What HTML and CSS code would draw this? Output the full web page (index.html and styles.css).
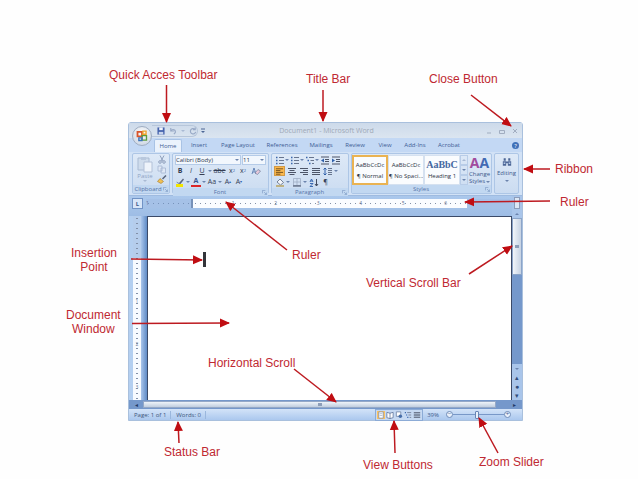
FILE: index.html
```html
<!DOCTYPE html>
<html lang="en">
<head>
  <meta charset="UTF-8" />
  <meta name="viewport" content="width=device-width, initial-scale=1.0"/>
  <title>Parts of the Word Window</title>
  <link rel="stylesheet" href="styles.css">
</head>
<body>
  <!-- shared icons -->
  <svg class="defs" width="0" height="0" aria-hidden="true">
    <symbol id="i-lines" viewBox="0 0 10 9"><path d="M1 1.5h8M1 3.5h8M1 5.5h8M1 7.5h8" stroke="#4d5568" fill="none"/></symbol>
    <symbol id="i-left" viewBox="0 0 10 9"><path d="M1 1.5h8M1 3.5h5M1 5.5h8M1 7.5h5" stroke="#6b4a1c" fill="none"/></symbol>
    <symbol id="i-center" viewBox="0 0 10 9"><path d="M1 1.5h8M2.5 3.5h5M1 5.5h8M2.5 7.5h5" stroke="#4d5568" fill="none"/></symbol>
    <symbol id="i-right" viewBox="0 0 10 9"><path d="M1 1.5h8M4 3.5h5M1 5.5h8M4 7.5h5" stroke="#4d5568" fill="none"/></symbol>
    <symbol id="i-bullets" viewBox="0 0 10 9"><path d="M1 1.5h1.5M1 4.5h1.5M1 7.5h1.5" stroke="#3b67ad" stroke-width="1.5"/><path d="M4 1.5h5M4 4.5h5M4 7.5h5" stroke="#68758e"/></symbol>
    <symbol id="i-multi" viewBox="0 0 10 9"><path d="M1 1.5h1.5M2.5 4.5H4M4 7.5h1.5" stroke="#3b67ad" stroke-width="1.5"/><path d="M4 1.5h5M5.5 4.5H9M7 7.5h2" stroke="#68758e"/></symbol>
    <symbol id="i-outdent" viewBox="0 0 10 9"><path d="M1 1h8M5 3.5h4M5 5.5h4M1 8h8" stroke="#4d5568"/><path d="M4 2.5v4L1 4.5z" fill="#2e5faa"/></symbol>
    <symbol id="i-indent" viewBox="0 0 10 9"><path d="M1 1h8M5 3.5h4M5 5.5h4M1 8h8" stroke="#4d5568"/><path d="M1 2.5v4l3-2z" fill="#2e5faa"/></symbol>
    <symbol id="i-spacing" viewBox="0 0 10 9"><path d="M2 1v7M.5 2.5L2 1l1.5 1.5M.5 6.5L2 8l1.5-1.5" stroke="#2e5faa" fill="none"/><path d="M5 1.5h4M5 3.5h4M5 5.5h4M5 7.5h4" stroke="#68758e"/></symbol>
    <symbol id="i-fill" viewBox="0 0 10 9"><path d="M2 4l3-3 3.5 3.5-3 2.5z" fill="#f3f5fa" stroke="#5d6980" stroke-width=".8"/><path d="M1 8h8" stroke="#b9a35e" stroke-width="1.5"/></symbol>
    <symbol id="i-border" viewBox="0 0 10 9"><path d="M1.5.5h7v7h-7zM5 .5v7M1.5 4h7" stroke="#9aa7bf" stroke-width=".7" fill="none"/><path d="M1 8h8" stroke="#3d4860"/></symbol>
    <symbol id="i-sort" viewBox="0 0 10 9"><path d="M1 4l1.5-3L4 4M1.5 3h2M1 5.5h3L1 8.5h3" stroke="#2e5faa" stroke-width=".9" fill="none"/><path d="M7.5 1v7M6 6l1.500 2L9 6" stroke="#444d60" fill="none"/></symbol>
    <symbol id="i-marker" viewBox="0 0 10 9"><path d="M1 3.500l3 1.500L8 .500l1 1L5.500 6 3 5.500z" fill="#5d6980"/><path d="M1 7.500h7" stroke="#f2e500" stroke-width="3"/></symbol>
    <symbol id="i-eraser" viewBox="0 0 10 9"><path d="M1 7l2-6 2 6M2 5h2" stroke="#4a6ea9" stroke-width=".8" fill="none"/><path d="M4 6l3-3.500 2.500 1.500-3 3.500z" fill="#e8c9dc" stroke="#71809c" stroke-width=".7"/></symbol>
    <symbol id="i-scissors" viewBox="0 0 10 9"><path d="M3 .5l3 5.500M7 .500L4 6" stroke="#8fa0bd" fill="none"/><circle cx="3" cy="7" r="1.300" fill="none" stroke="#8fa0bd"/><circle cx="7" cy="7" r="1.300" fill="none" stroke="#8fa0bd"/></symbol>
    <symbol id="i-copy" viewBox="0 0 10 9"><path d="M1 1h4v5H1zM4 3h4.500v5H4z" fill="#dfe8f5" stroke="#a3b5d2" stroke-width=".8"/></symbol>
    <symbol id="i-brush" viewBox="0 0 10 9"><path d="M9 .5L5.500 4" stroke="#56627a" stroke-width="1.500"/><path d="M3 3.500l3.500 3-2.500 2L.5 6.500z" fill="#f0c153" stroke="#a4792a" stroke-width=".6"/></symbol>
    <symbol id="i-paste" viewBox="0 0 18 17"><path d="M2 2h11v12H2z" fill="#cfdcec" stroke="#aabbd3"/><path d="M5 1h5v3H5z" fill="#b9c8dd"/><path d="M8 6h8v10H8z" fill="#eef3fa" stroke="#b2c1d8"/></symbol>
    <symbol id="i-launch" viewBox="0 0 6 6"><path d="M.5 4V.5H4M2.500 2.500l2.500 2.500M5.500 3v2.500H3" stroke="#7c98c3" stroke-width=".8" fill="none"/></symbol>
    <symbol id="i-binoc" viewBox="0 0 12 11"><path d="M2 1h2.500v3H2zM7.500 1H10v3H7.500zM1 4.500h4V10H1zM7 4.500h4V10H7zM5 5h2v2H5z" fill="#4d6797"/><path d="M2 6h2v2H2zM8 6h2v2H8z" fill="#b7cbe9"/></symbol>
    <symbol id="i-page" viewBox="0 0 8 9"><path d="M1.500 1h5v7h-5z" fill="#fff" stroke="#7087ae" stroke-width=".8"/><path d="M2.500 3h3M2.500 5h3" stroke="#8d9fbe" stroke-width=".7"/></symbol>
    <symbol id="i-book" viewBox="0 0 8 9"><path d="M.5 1.500L4 2.500l3.500-1v6L4 8.500l-3.500-1zM4 2.500v6" fill="#fff" stroke="#4f6691" stroke-width=".8"/></symbol>
    <symbol id="i-web" viewBox="0 0 8 9"><path d="M1 1h5v5H1z" fill="#fff" stroke="#5f7499" stroke-width=".8"/><circle cx="5.500" cy="6" r="2" fill="#466da8"/></symbol>
  </svg>

  <figure class="diagram">
    <div class="window">
      <header class="titlebar">
        <button class="office" aria-label="Office Button">
          <svg viewBox="0 0 20 20">
            <path d="M5 5.500h5v5H5z" fill="none" stroke="#d8552b" stroke-width="2"/>
            <path d="M11 4.500h3.500V8H11z" fill="none" stroke="#f0a22b" stroke-width="1.500"/>
            <path d="M10 9.500h5v5h-5z" fill="none" stroke="#5c9b3e" stroke-width="1.500"/>
            <path d="M6.500 12H10v3H6.500z" fill="none" stroke="#3b73b9" stroke-width="1.500"/>
          </svg>
        </button>
        <div class="quick">
          <button aria-label="Save"><svg viewBox="0 0 9 9"><path d="M.5.5h8v8h-8z" fill="#4563ad"/><path d="M2.500.5h4v3h-4z" fill="#f2f5fb"/><path d="M2 5.500h5v3H2z" fill="#c9d5ec"/></svg></button>
          <button aria-label="Undo"><svg viewBox="0 0 9 9"><path d="M2 1v3.500h3.500M2 4.500c2-3 6-1.500 5 2L5.500 8" fill="none" stroke="#98a9c6" stroke-width="1.300"/></svg></button>
          <i class="arrow pale"></i>
          <button aria-label="Repeat"><svg viewBox="0 0 9 9"><path d="M6.500 2.500a3 3 0 1 0 1 3M7 .5v2.500H4.500" fill="none" stroke="#98a9c6" stroke-width="1.300"/></svg></button>
        </div>
        <button class="customize" aria-label="Customize Quick Access Toolbar"><svg viewBox="0 0 6 6"><path d="M1 1h4" stroke="#4c6795"/><path d="M1 3h4L3 5z" fill="#4c6795"/></svg></button>
        <div class="title">Document1 - Microsoft Word</div>
        <div class="controls">
          <button aria-label="Minimize"><svg viewBox="0 0 8 8"><path d="M2 6h4"/></svg></button>
          <button aria-label="Restore"><svg viewBox="0 0 8 8"><path d="M1.500 3.500h5v3h-5z"/></svg></button>
          <button aria-label="Close"><svg viewBox="0 0 8 8"><path d="M2 2l4 4M6 2L2 6"/></svg></button>
        </div>
      </header>

      <nav class="tabs">
        <a class="active" href="#home">Home</a>
        <a href="#insert">Insert</a>
        <a class="wide" href="#layout">Page Layout</a>
        <a class="wide" href="#references">References</a>
        <a href="#mailings">Mailings</a>
        <a href="#review">Review</a>
        <a class="narrow" href="#view">View</a>
        <a href="#addins">Add-Ins</a>
        <a href="#acrobat">Acrobat</a>
        <button class="help" aria-label="Help">?</button>
      </nav>

      <div class="ribbon">
        <section class="group clipboard">
          <div class="tools">
            <button class="big paste"><svg><use href="#i-paste"/></svg>Paste<i class="arrow pale"></i></button>
            <div class="stack">
              <button aria-label="Cut"><svg><use href="#i-scissors"/></svg></button>
              <button aria-label="Copy"><svg><use href="#i-copy"/></svg></button>
              <button aria-label="Format Painter"><svg><use href="#i-brush"/></svg></button>
            </div>
          </div>
          <h2>Clipboard<svg><use href="#i-launch"/></svg></h2>
        </section>

        <section class="group font">
          <div class="rows">
            <div class="row">
              <span class="combo family"><select aria-label="Font"><option>Calibri (Body)</option></select><i class="arrow"></i></span>
              <span class="combo"><select aria-label="Font size"><option>11</option></select><i class="arrow"></i></span>
            </div>
            <div class="row">
              <button><b>B</b></button>
              <button><em>I</em></button>
              <button><u>U</u></button>
              <i class="arrow"></i>
              <button class="text"><s>abe</s></button>
              <button>x<sub>2</sub></button>
              <button>x<sup>2</sup></button>
              <button class="text" aria-label="Clear Formatting"><svg><use href="#i-eraser"/></svg></button>
            </div>
            <div class="row">
              <button aria-label="Highlight"><svg><use href="#i-marker"/></svg></button>
              <i class="arrow"></i>
              <button class="color">A</button>
              <i class="arrow"></i>
              <button>Aa</button>
              <i class="arrow"></i>
              <button>A<sup>▴</sup></button>
              <button>A<sup>▾</sup></button>
            </div>
          </div>
          <h2>Font<svg><use href="#i-launch"/></svg></h2>
        </section>

        <section class="group paragraph">
          <div class="rows">
            <div class="row">
              <button aria-label="Bullets"><svg><use href="#i-bullets"/></svg></button><i class="arrow"></i>
              <button aria-label="Numbering"><svg><use href="#i-bullets"/></svg></button><i class="arrow"></i>
              <button aria-label="Multilevel List"><svg><use href="#i-multi"/></svg></button><i class="arrow"></i>
              <button aria-label="Decrease Indent"><svg><use href="#i-outdent"/></svg></button>
              <button aria-label="Increase Indent"><svg><use href="#i-indent"/></svg></button>
            </div>
            <div class="row">
              <button class="on" aria-label="Align Left"><svg><use href="#i-left"/></svg></button>
              <button aria-label="Center"><svg><use href="#i-center"/></svg></button>
              <button aria-label="Align Right"><svg><use href="#i-right"/></svg></button>
              <button aria-label="Justify"><svg><use href="#i-lines"/></svg></button>
              <button aria-label="Line Spacing"><svg><use href="#i-spacing"/></svg></button><i class="arrow"></i>
            </div>
            <div class="row">
              <button aria-label="Shading"><svg><use href="#i-fill"/></svg></button><i class="arrow"></i>
              <button aria-label="Borders"><svg><use href="#i-border"/></svg></button><i class="arrow"></i>
              <button aria-label="Sort"><svg><use href="#i-sort"/></svg></button>
              <button>¶</button>
            </div>
          </div>
          <h2>Paragraph<svg><use href="#i-launch"/></svg></h2>
        </section>

        <section class="group styles">
          <div class="tools">
            <button class="card selected"><span>AaBbCcDc</span>¶ Normal</button>
            <button class="card"><span>AaBbCcDc</span>¶ No Spaci...</button>
            <button class="card"><span class="heading">AaBbC</span>Heading 1</button>
            <div class="stack more">
              <button aria-label="Row up"><i class="arrow up pale"></i></button>
              <button aria-label="Row down"><i class="arrow"></i></button>
              <button aria-label="More"><i class="arrow"></i></button>
            </div>
            <button class="big change"><span class="letters"><b>A</b><b>A</b></span>Change<span class="drop">Styles<i class="arrow"></i></span></button>
          </div>
          <h2>Styles<svg><use href="#i-launch"/></svg></h2>
        </section>

        <section class="group editing">
          <button class="big"><svg><use href="#i-binoc"/></svg>Editing<i class="arrow"></i></button>
        </section>
      </div>

      <div class="workspace">
        <div class="ruler">
          <button class="tabstop" aria-label="Tab stop">L</button>
          <div class="scale">
            <span class="outside">1</span>
            <span class="inside"><i>1</i><i>2</i><i>3</i><i>4</i><i>5</i><i>6</i></span>
          </div>
        </div>
        <div class="vruler"><div class="vscale"><i>1</i><i>2</i><i>3</i></div></div>
        <main class="page"><span class="caret"></span></main>
        <div class="vscroll">
          <button class="split" aria-label="View Ruler"></button>
          <button aria-label="Scroll up"><i class="arrow up"></i></button>
          <div class="vthumb"></div>
          <div class="track"></div>
          <button aria-label="Scroll down"><i class="arrow"></i></button>
          <button aria-label="Previous page">▴</button>
          <button aria-label="Browse">●</button>
          <button aria-label="Next page">▾</button>
        </div>
        <div class="hscroll">
          <button aria-label="Scroll left">◂</button>
          <div class="hthumb"></div>
          <button class="end" aria-label="Scroll right">▸</button>
        </div>
      </div>

      <footer class="status">
        <span class="cell">Page: 1 of 1</span>
        <span class="cell">Words: 0</span>
        <div class="views">
          <button class="on" aria-label="Print Layout"><svg><use href="#i-page"/></svg></button>
          <button aria-label="Full Screen Reading"><svg><use href="#i-book"/></svg></button>
          <button aria-label="Web Layout"><svg><use href="#i-web"/></svg></button>
          <button aria-label="Outline"><svg><use href="#i-multi"/></svg></button>
          <button aria-label="Draft"><svg><use href="#i-lines"/></svg></button>
        </div>
        <span class="percent">39%</span>
        <button class="round" aria-label="Zoom out">−</button>
        <input class="slider" type="range" min="0" max="100" value="46" aria-label="Zoom">
        <button class="round" aria-label="Zoom in">+</button>
      </footer>
    </div>

    <!-- callouts -->
    <svg class="arrows" width="638" height="479" aria-hidden="true">
      <marker id="head" markerUnits="userSpaceOnUse" markerWidth="10" markerHeight="10" refX="9" refY="5" orient="auto">
        <path d="M0 .5L10 5 0 9.500z" fill="#c00d12"/>
      </marker>
      <g stroke="#bd1a20" stroke-width="1.500" marker-end="url(#head)">
        <path d="M166.500 85V122"/>
        <path d="M323 90V121"/>
        <path d="M471 95L511 126"/>
        <path d="M550 169H524"/>
        <path d="M550 201L465 202"/>
        <path d="M287 250L226 202"/>
        <path d="M131 259L202 260"/>
        <path d="M132 323.500L229 323"/>
        <path d="M469 274L512 246"/>
        <path d="M294 369L336 402"/>
        <path d="M179 443L178 422"/>
        <path d="M395 453L394 421"/>
        <path d="M498 453L479 418"/>
      </g>
    </svg>
    <span class="label quick-label">Quick Acces Toolbar</span>
    <span class="label title-label">Title Bar</span>
    <span class="label close-label">Close Button</span>
    <span class="label ribbon-label">Ribbon</span>
    <span class="label ruler-label">Ruler</span>
    <span class="label ruler-inner-label">Ruler</span>
    <span class="label insertion-label">Insertion<br>Point</span>
    <span class="label document-label">Document<br>Window</span>
    <span class="label vscroll-label">Vertical Scroll Bar</span>
    <span class="label hscroll-label">Horizontal Scroll</span>
    <span class="label status-label">Status Bar</span>
    <span class="label views-label">View Buttons</span>
    <span class="label zoom-label">Zoom Slider</span>
  </figure>
</body>
</html>
```
FILE: styles.css
```css
* {
  box-sizing: border-box;
}

body {
  margin: 0;
  background: #fefefe;
  font-family: "Open Sans", "Liberation Sans", sans-serif;
  font-size: 6px;
  line-height: 8px;
  color: #3d5a8c;
}

button,
select {
  font: inherit;
  color: inherit;
  background: none;
  border: 0;
  padding: 0;
  margin: 0;
}

button {
  display: flex;
  align-items: center;
  justify-content: center;
}

svg {
  display: block;
}

.defs {
  position: absolute;
}

.diagram {
  position: relative;
  max-width: 638px;
  margin: 0;
  padding: 122px 115px 59px 128px;
}

.window {
  background: #bfd6f3;
  border: 1px solid #a9c0dd;
  border-radius: 3px 3px 0 0;
}

.arrow {
  flex: none;
  display: inline-block;
  width: 4px;
  height: 2px;
  border: 2px solid transparent;
  border-top-color: #6c84ad;
  border-bottom: 0;
}

.arrow.pale {
  border-top-color: #a9bad4;
}

.arrow.up {
  transform: rotate(180deg);
}

/* title bar */
.titlebar {
  position: relative;
  display: flex;
  align-items: center;
  height: 15px;
  padding-left: 23px;
  background: linear-gradient(#cddaea, #dbe5f0);
}

.office {
  position: absolute;
  left: 3px;
  top: 3px;
  width: 20px;
  height: 20px;
  border-radius: 50%;
  border: 1px solid #9fadc2;
  background: radial-gradient(circle at 50% 35%, #fdfdfd, #c3cfdf);
}

.office svg {
  width: 18px;
  height: 18px;
}

.quick {
  display: flex;
  align-items: center;
  gap: 4px;
  width: 46px;
  height: 12px;
  padding-left: 5px;
  border: 1px solid #b7c6da;
  border-left: 0;
  border-radius: 0 6px 6px 0;
}

.quick svg {
  width: 8px;
  height: 8px;
}

.customize {
  width: 10px;
}

.customize svg {
  width: 6px;
  height: 6px;
}

.title {
  flex: 1;
  padding-right: 40px;
  text-align: center;
  font-size: 7px;
  color: #a0a9b7;
}

.controls {
  display: flex;
  gap: 5px;
  padding-right: 3px;
}

.controls svg {
  width: 8px;
  height: 8px;
  fill: none;
  stroke: #a1adc0;
}

/* tabs */
.tabs {
  display: flex;
  align-items: flex-end;
  height: 14px;
  padding-left: 25px;
  background: #c3d8f4;
}

.tabs a {
  width: 34px;
  height: 13px;
  line-height: 13px;
  text-align: center;
  color: #3e5d94;
  text-decoration: none;
}

.tabs .active {
  width: 28px;
  background: #eaf2fc;
  border: 1px solid #a9c3e5;
  border-bottom: 0;
  border-radius: 2px 2px 0 0;
}

.tabs .wide {
  width: 44px;
}

.tabs .narrow {
  width: 26px;
}

.help {
  width: 7px;
  height: 7px;
  margin: 0 3px 3px auto;
  border-radius: 50%;
  background: #3f70b8;
  color: #fff;
}

/* ribbon */
.ribbon {
  display: flex;
  gap: 2px;
  height: 44px;
  padding: 1px 3px;
  background: #d2e2f6;
  border-bottom: 1px solid #9fbbe0;
}

.group {
  display: flex;
  flex-direction: column;
  border: 1px solid #adc6e6;
  border-radius: 2px;
  background: linear-gradient(#dee9f7, #cbdcf1);
}

.group h2 {
  display: grid;
  grid-template-columns: 5px 1fr 5px;
  align-items: center;
  height: 8px;
  margin: auto 0 0;
  padding-right: 1px;
  background: #c2d8f1;
  font-size: 6px;
  font-weight: normal;
  text-align: center;
  color: #5573a8;
}

.group h2::before {
  content: "";
}

.group h2 svg {
  width: 5px;
  height: 5px;
}

.clipboard {
  width: 38px;
}

.group.clipboard h2 {
  grid-template-columns: 0 1fr 5px;
}

.font {
  width: 97px;
}

.paragraph {
  width: 78px;
}

.styles {
  flex: 1;
}

.editing {
  width: 25px;
}

.tools {
  display: flex;
  height: 32px;
}

.stack {
  display: flex;
  flex-direction: column;
  justify-content: space-around;
}

.stack svg,
.row svg {
  width: 10px;
  height: 9px;
}

.big {
  flex-direction: column;
  justify-content: flex-start;
  padding-top: 2px;
  line-height: 7px;
}

.paste {
  width: 24px;
  color: #8fa3c4;
}

.paste svg {
  width: 18px;
  height: 17px;
}

.editing .big {
  padding-top: 3px;
  gap: 3px;
}

.editing svg {
  width: 10px;
  height: 10px;
}

.rows {
  display: flex;
  flex-direction: column;
  gap: 1px;
  padding: 1px 2px;
}

.row {
  display: flex;
  align-items: center;
  gap: 1px;
  height: 10px;
}

.row button {
  width: 10px;
  height: 10px;
  font-size: 7px;
  color: #343e55;
}

.row .text {
  width: 13px;
}

.row sub,
.row sup {
  font-size: 4px;
  color: #2e5faa;
}

.row .color {
  border-bottom: 2px solid #dc2727;
  line-height: 6px;
  font-weight: bold;
  color: #38558c;
}

.row .on {
  background: #fbb84d;
  border: 1px solid #d39a45;
}

.combo {
  display: flex;
  align-items: center;
  flex: 1;
  height: 10px;
  padding-right: 1px;
  background: #f2f7fd;
  border: 1px solid #b4cbe8;
}

.combo.family {
  flex: 3;
}

.combo select {
  flex: 1;
  min-width: 0;
  height: 8px;
  line-height: 8px;
  appearance: none;
  color: #2f3a50;
}

.paragraph .row button {
  width: 11px;
}

.paragraph .row:first-child {
  gap: 0;
}

/* style gallery */
.styles .tools {
  padding: 1px 0 0;
}

.card {
  flex-direction: column;
  gap: 3px;
  width: 36px;
  height: 30px;
  overflow: hidden;
  white-space: nowrap;
  background: #fafcfe;
  border: 1px solid #d5e1f0;
  color: #2b3343;
}

.card.selected {
  border: 2px solid #eab352;
}

.card .heading {
  font-family: "Liberation Serif", serif;
  font-size: 10px;
  font-weight: bold;
  color: #44689f;
}

.more {
  width: 8px;
}

.more button {
  height: 10px;
  width: 8px;
  border: 1px solid #b9cde8;
}

.change {
  flex: 1;
  padding-top: 0;
}

.letters {
  display: flex;
  font-size: 14px;
  line-height: 16px;
  color: #426bb3;
}

.letters b:first-child {
  color: #a14c9e;
}

.drop {
  display: flex;
  align-items: center;
  gap: 1px;
}

/* document area */
.workspace {
  display: grid;
  grid-template: 20px 184px 9px / 18px 1fr 10px;
  background: linear-gradient(90deg, #a9c7ec 10px, #7198ce 18px, #a4c2e8 50%, #87acd9);
}

.ruler {
  grid-column: 1 / 3;
  display: flex;
  align-items: flex-start;
  gap: 3px;
  padding: 2px 2px 0 3px;
  background: linear-gradient(#abc8ec, #9ebde5);
}

.tabstop {
  width: 11px;
  height: 11px;
  border: 1px solid #7193c5;
  background: #d8e6f8;
  font-weight: bold;
}

.scale {
  flex: 1;
  display: flex;
  height: 9px;
  margin-top: 1px;
  background: #a5c1e7;
  font-size: 5px;
  line-height: 9px;
  color: #5d6e8c;
}

.outside {
  width: 45px;
  background: radial-gradient(circle, #7893ba 0.500px, transparent 1px) 0 0 / 5px 9px;
}

.inside {
  display: flex;
  width: 276px;
  padding-left: 19px;
  background: radial-gradient(circle, #8290a8 0.500px, transparent 1px) 0 0 / 5px 9px, #fafcff;
  border-left: 2px solid #7791b8;
}

.inside i {
  width: 43px;
  text-align: center;
  font-style: normal;
}

.vruler {
  padding: 0 6px 0 4px;
  background: linear-gradient(90deg, #b4cff0 4px, #a9c5eb 12px, #5f8bc6);
}

.vscale {
  display: flex;
  flex-direction: column;
  height: 184px;
  padding-top: 64px;
  background: radial-gradient(circle, #8290a8 0.500px, transparent 1px) 0 0 / 8px 5px, linear-gradient(#b5cdec 42px, #f8fbff 42px);
  font-size: 5px;
  color: #7483a0;
}

.vscale i {
  height: 43px;
  line-height: 43px;
  font-style: normal;
  text-align: center;
}

.page {
  padding: 35px 0 0 55px;
  background: #fff;
  border: 1px solid #3b4a68;
  border-bottom: 0;
}

.caret {
  display: block;
  width: 3px;
  height: 15px;
  background: #33353a;
}

.vscroll {
  grid-column: 3;
  grid-row: 1 / 3;
  display: flex;
  flex-direction: column;
  background: #a9c5ea;
}

.vscroll button {
  height: 9px;
  font-size: 7px;
  line-height: 8px;
  color: #324d7c;
}

.vscroll .split {
  height: 12px;
  margin: 1px 2px 0;
  border: 1px solid #8c9cba;
  background: #dce7f5;
}

.vthumb {
  height: 57px;
  border: 1px solid #8ba4c8;
  background: linear-gradient(#8c9db8, #8c9db8) center / 4px 3px no-repeat, linear-gradient(90deg, #f1f5fa, #c6d2e3);
}

.track {
  flex: 1;
  background: #7598cb;
}

.hscroll {
  grid-column: 1 / 4;
  display: flex;
  background: #7598cb;
}

.hscroll button {
  width: 14px;
  color: #233b66;
}

.hscroll .end {
  width: 26px;
  padding-left: 10px;
}

.hthumb {
  flex: 1;
  margin: 1px 0;
  border: 1px solid #94a8c7;
  background: linear-gradient(#8c9db8, #8c9db8) center / 4px 3px no-repeat, linear-gradient(#eef3f9, #c0cedf);
}

/* status bar */
.status {
  display: flex;
  align-items: center;
  height: 11px;
  padding-right: 11px;
  background: linear-gradient(#d3e3f8, #abc8ee);
}

.cell {
  padding: 0 4px 0 5px;
  border-right: 1px solid #9ab7dd;
  color: #40567d;
}

.views {
  display: flex;
  gap: 1px;
  margin-left: auto;
  padding: 1px;
  background: #c6d9f2;
  border: 1px solid #8cabd6;
}

.views svg {
  width: 8px;
  height: 8px;
}

.views .on {
  background: #fbc15f;
}

.percent {
  padding: 0 7px 0 4px;
}

.round {
  width: 7px;
  height: 7px;
  border: 1px solid #6f8cb9;
  border-radius: 50%;
  background: #e8f0fb;
  line-height: 5px;
}

.slider {
  appearance: none;
  width: 51px;
  height: 9px;
  margin: 0;
  background: linear-gradient(#7898c8, #7898c8) center / 100% 1px no-repeat;
}

.slider::-webkit-slider-thumb {
  appearance: none;
  width: 4px;
  height: 8px;
  border: 1px solid #6785b5;
  border-radius: 1px;
  background: #e9f1fb;
}

/* callouts */
.arrows {
  position: absolute;
  left: 0;
  top: 0;
  pointer-events: none;
}

.label {
  position: absolute;
  font-family: "Liberation Sans", Arial, sans-serif;
  font-size: 12px;
  line-height: 14px;
  text-align: center;
  white-space: nowrap;
  color: #bf2932;
}

.quick-label {
  left: 109px;
  top: 68px;
}

.title-label {
  left: 306px;
  top: 72px;
}

.close-label {
  left: 429px;
  top: 72px;
}

.ribbon-label {
  left: 555px;
  top: 162px;
}

.ruler-label {
  left: 560px;
  top: 195px;
}

.ruler-inner-label {
  left: 292px;
  top: 248px;
}

.insertion-label {
  left: 71px;
  top: 246px;
}

.document-label {
  left: 66px;
  top: 308px;
}

.vscroll-label {
  left: 366px;
  top: 276px;
}

.hscroll-label {
  left: 208px;
  top: 356px;
}

.status-label {
  left: 164px;
  top: 445px;
}

.views-label {
  left: 363px;
  top: 458px;
}

.zoom-label {
  left: 479px;
  top: 455px;
}
```
